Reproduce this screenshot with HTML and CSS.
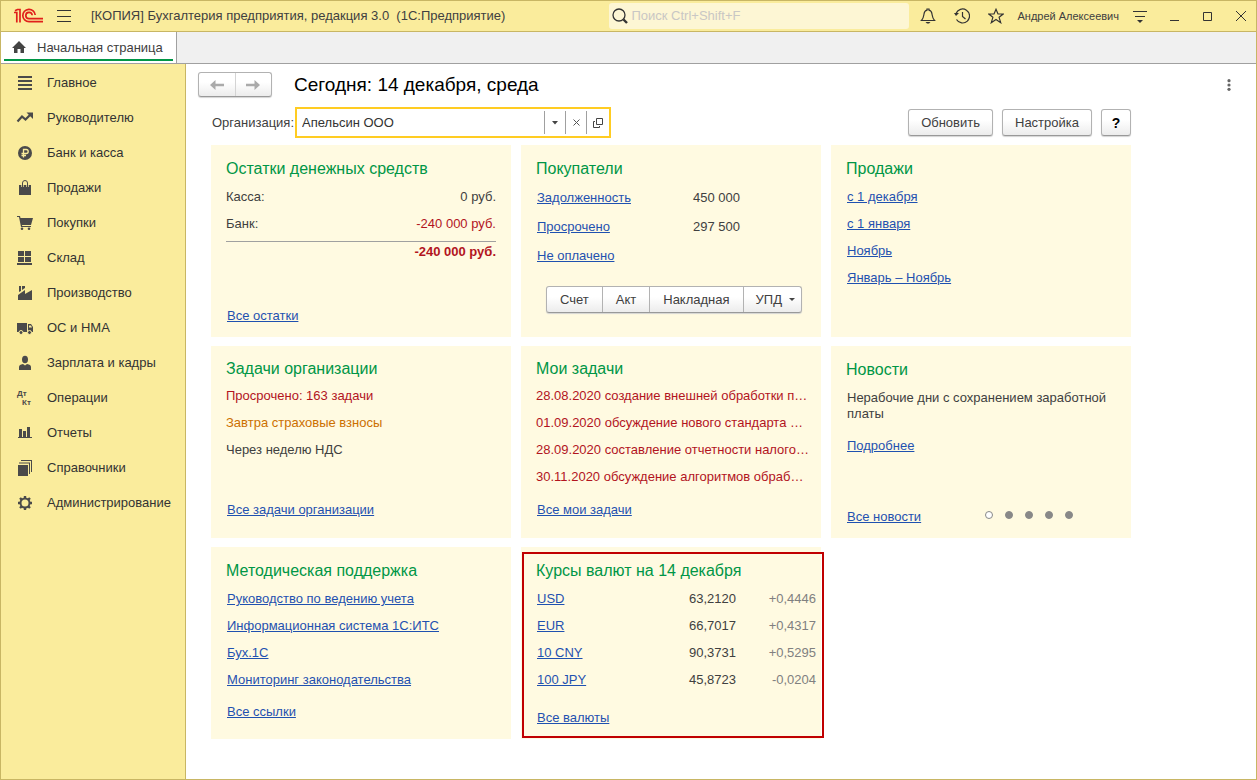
FILE: index.html
```html
<!DOCTYPE html>
<html lang="ru">
<head>
<meta charset="utf-8">
<title>Бухгалтерия предприятия</title>
<link rel="stylesheet" href="styles.css">
</head>
<body>
<div class="window">
  <header class="titlebar">
    <svg class="logo" width="30" height="16" viewBox="0 0 30 16" fill="none" stroke="#e0201b" stroke-width="1.700"><path d="M0 4.500H2.800V14.500M1 2.800L3.500 1.500H6V14.500M21.200 7A6.200 6.200 0 1 0 15 13.700H29M18.200 7.300A3.200 3.200 0 1 0 15 10.700H29"/></svg>
    <button class="flat menu" aria-label="Меню"><svg width="16" height="14" viewBox="0 0 16 14" stroke="#333" stroke-width="1"><path d="M1 1.5H15M1 7.5H15M1 12.5H15"/></svg></button>
    <span class="caption">[КОПИЯ] Бухгалтерия предприятия, редакция 3.0&nbsp; (1С:Предприятие)</span>
    <div class="search">
      <svg width="16" height="16" viewBox="0 0 16 16" fill="none" stroke="#333"><circle cx="7" cy="7" r="6" stroke-width="1.3"/><path d="M11.5 11.5L15 15" stroke-width="2.4"/></svg>
      <input type="search" aria-label="Поиск" placeholder="Поиск Ctrl+Shift+F">
    </div>
    <button class="flat tool" aria-label="Уведомления"><svg width="16" height="16" viewBox="0 0 16 16" fill="none" stroke="#333" stroke-width="1.2"><path d="M1.5 12.5C3.5 10.5 3.5 9 4 6C4.300 3.500 5.500 2.500 7 2.200V1H9V2.200C10.500 2.500 11.700 3.500 12 6C12.500 9 12.500 10.500 14.500 12.500Z"/><path d="M5.500 14H10.500L9 15.600H7Z" fill="#333" stroke="none"/></svg></button>
    <button class="flat tool" aria-label="История"><svg width="16" height="16" viewBox="0 0 16 16" fill="none" stroke="#333" stroke-width="1.2"><path d="M2 5.500A7 7 0 1 1 2.500 11.500M8.500 4V8.500L11.500 11"/><path d="M0 5H5L2 8Z" fill="#333" stroke="none"/></svg></button>
    <button class="flat tool" aria-label="Избранное"><svg width="16" height="16" viewBox="0 0 16 16" fill="none" stroke="#333" stroke-width="1.200"><path d="M8 1.300L10 6H15.200L11.100 9.300L12.700 14.700L8 11.500L3.300 14.700L4.900 9.300L.8 6H6Z"/></svg></button>
    <button class="flat user">Андрей Алексеевич</button>
    <button class="flat tool" aria-label="Настройки окна"><svg width="16" height="16" viewBox="0 0 16 16" stroke="#333"><path d="M1 3.500H15M3 8.500H13"/><path d="M5 12H11L8 15Z" fill="#333" stroke="none"/></svg></button>
    <button class="flat control" aria-label="Свернуть"><svg width="16" height="16" viewBox="0 0 16 16" stroke="#333"><path d="M4 12.500H13"/></svg></button>
    <button class="flat control" aria-label="Развернуть"><svg width="16" height="16" viewBox="0 0 16 16" fill="none" stroke="#333"><path d="M4.500 4.500H12.500V12.500H4.500Z"/></svg></button>
    <button class="flat control" aria-label="Закрыть"><svg width="16" height="16" viewBox="0 0 16 16" stroke="#333"><path d="M4 3L14 13M14 3L4 13"/></svg></button>
  </header>

  <nav class="tabs" aria-label="Открытые страницы">
    <a class="tab" href="#"><svg width="14" height="13" viewBox="0 0 14 13" fill="#444"><path d="M7 0L14 7H12V12H8.500V8H5.500V12H2V7H0Z"/></svg><span>Начальная страница</span></a>
  </nav>

  <div class="body">
    <nav class="sidebar" aria-label="Разделы">
      <a href="#"><svg viewBox="0 0 16 16"><path d="M1 1H15V3H1ZM1 5H15V7H1ZM1 9H15V11H1ZM1 13H15V15H1Z"/></svg>Главное</a>
      <a href="#"><svg viewBox="0 0 16 16"><path d="M.5 11.500L5 6.500L8.500 9.500L13 5" fill="none" stroke="#4a4a4a" stroke-width="2.200"/><path d="M9.500 2.500H16V9Z"/></svg>Руководителю</a>
      <a href="#"><svg viewBox="0 0 16 16"><circle cx="8" cy="8" r="7"/><path d="M6.500 12.500V4.500H9.200A2 2 0 0 1 9.200 8.500H4.500M4.500 10.500H9" fill="none" stroke="#faec9c" stroke-width="1.300"/></svg>Банк и касса</a>
      <a href="#"><svg viewBox="0 0 16 16"><path d="M2 5H14V15H2Z"/><path d="M5.500 7V3.500A2.500 2.500 0 0 1 10.500 3.500V7" fill="none" stroke="#faec9c" stroke-width="2.400"/><path d="M5.500 7V3A2.500 2.500 0 0 1 10.500 3V7" fill="none" stroke="#4a4a4a"/></svg>Продажи</a>
      <a href="#"><svg viewBox="0 0 16 16"><path d="M0 1H3L3.500 3H16L14 10H5L5.200 11H14V12H4L2 2H0Z"/><circle cx="5" cy="13.700" r="1.300"/><circle cx="12" cy="13.700" r="1.300"/></svg>Покупки</a>
      <a href="#"><svg viewBox="0 0 16 16"><path d="M1 1H7V6H1ZM8 1H14V6H8ZM1 7H7V12H1ZM8 7H14V12H8ZM0 13H15V15H0Z"/></svg>Склад</a>
      <a href="#"><svg viewBox="0 0 16 16"><path d="M1 15V10L8 5V9L15 5V15ZM2 1H4V6L2 7ZM5 1H8V3L5 5Z"/></svg>Производство</a>
      <a href="#"><svg viewBox="0 0 16 16"><path d="M0 3H10V12H0ZM11 4H14L16 7V12H11Z"/><path d="M12 5.500H14L15 7.500H12Z" fill="#faec9c"/><g stroke="#faec9c"><circle cx="4" cy="12.500" r="2"/><circle cx="12.500" cy="12.500" r="2"/></g></svg>ОС и НМА</a>
      <a href="#"><svg viewBox="0 0 16 16"><ellipse cx="8" cy="4.500" rx="3" ry="3.800"/><path d="M2 15V12Q2 9.500 6 9L8 10.500L10 9Q14 9.500 14 12V15Z"/></svg>Зарплата и кадры</a>
      <a href="#"><svg viewBox="0 0 16 16" class="dtkt"><text x="0" y="6">Дт</text><text x="5" y="15">Кт</text></svg>Операции</a>
      <a href="#"><svg viewBox="0 0 16 16"><path d="M2 4H5V12H2ZM6 6H9V12H6ZM10 2H13V12H10ZM1 12H15V13H1Z"/></svg>Отчеты</a>
      <a href="#"><svg viewBox="0 0 16 16"><path d="M1 5H11V16H1ZM2 2.500H13V14H12V3.500H2ZM4 0H15V12H14V1H4Z"/></svg>Справочники</a>
      <a href="#"><svg viewBox="0 0 16 16" fill="none" stroke="#4a4a4a"><circle cx="8" cy="8" r="4.500" stroke-width="2"/><path d="M8 1V3.500M8 12.500V15M1 8H3.500M12.500 8H15M3 3L4.900 4.900M11.100 11.100L13 13M13 3L11.100 4.900M4.900 11.100L3 13" stroke-width="2.400"/></svg>Администрирование</a>
    </nav>

    <main class="main">
      <div class="heading">
        <div class="group history">
          <button aria-label="Назад"><svg width="14" height="10" viewBox="0 0 14 10" fill="#aaa"><path d="M0 5L5.500 0V3.700H14V6.300H5.500V10Z"/></svg></button><button aria-label="Вперед"><svg width="14" height="10" viewBox="0 0 14 10" fill="#aaa"><path d="M14 5L8.500 0V3.700H0V6.300H8.500V10Z"/></svg></button>
        </div>
        <h1>Сегодня: 14 декабря, среда</h1>
        <button class="flat more" aria-label="Еще"><svg width="4" height="12" viewBox="0 0 4 12" fill="#666"><circle cx="2" cy="1.700" r="1.600"/><circle cx="2" cy="6" r="1.600"/><circle cx="2" cy="10.300" r="1.600"/></svg></button>
      </div>

      <div class="toolbar">
        <label for="org">Организация:</label>
        <div class="field">
          <input id="org" type="text" value="Апельсин ООО">
          <button aria-label="Выбрать"><svg width="6" height="4" viewBox="0 0 6 4" fill="#444"><path d="M0 0H6L3 3.500Z"/></svg></button>
          <button aria-label="Очистить"><svg width="7" height="7" viewBox="0 0 7 7" stroke="#555"><path d="M.5 .5L6.500 6.500M6.500 .5L.5 6.500"/></svg></button>
          <button aria-label="Открыть"><svg width="10" height="10" viewBox="0 0 10 10" fill="none" stroke="#444"><path d="M3.500 .5H9.500V6.500H3.500ZM2 3.500H.5V9.500H6.500V8"/></svg></button>
        </div>
        <div class="actions">
          <button class="btn">Обновить</button>
          <button class="btn">Настройка</button>
          <button class="btn help">?</button>
        </div>
      </div>

      <div class="cards">
        <section class="card">
          <h2>Остатки денежных средств</h2>
          <dl>
            <div class="pair"><dt>Касса:</dt><dd>0 руб.</dd></div>
            <div class="pair"><dt>Банк:</dt><dd class="red">-240 000 руб.</dd></div>
          </dl>
          <p class="total red">-240 000 руб.</p>
          <a class="foot" href="#">Все остатки</a>
        </section>

        <section class="card">
          <h2>Покупатели</h2>
          <table class="debts">
            <tr><td><a href="#">Задолженность</a></td><td>450 000</td></tr>
            <tr><td><a href="#">Просрочено</a></td><td>297 500</td></tr>
            <tr><td><a href="#">Не оплачено</a></td><td></td></tr>
          </table>
          <div class="group docs">
            <button>Счет</button><button>Акт</button><button>Накладная</button><button>УПД<svg width="6" height="3" viewBox="0 0 6 3" fill="#444"><path d="M0 0H6L3 3Z"/></svg></button>
          </div>
        </section>

        <section class="card">
          <h2>Продажи</h2>
          <ul>
            <li><a href="#">с 1 декабря</a></li>
            <li><a href="#">с 1 января</a></li>
            <li><a href="#">Ноябрь</a></li>
            <li><a href="#">Январь – Ноябрь</a></li>
          </ul>
        </section>

        <section class="card tasks">
          <h2>Задачи организации</h2>
          <ul>
            <li class="red">Просрочено: 163 задачи</li>
            <li class="orange">Завтра страховые взносы</li>
            <li>Через неделю НДС</li>
          </ul>
          <a class="foot" href="#">Все задачи организации</a>
        </section>

        <section class="card tasks">
          <h2>Мои задачи</h2>
          <ul class="red">
            <li>28.08.2020 создание внешней обработки п…</li>
            <li>01.09.2020 обсуждение нового стандарта …</li>
            <li>28.09.2020 составление отчетности налого…</li>
            <li>30.11.2020 обсуждение алгоритмов обраб…</li>
          </ul>
          <a class="foot" href="#">Все мои задачи</a>
        </section>

        <section class="card">
          <h2>Новости</h2>
          <p class="news">Нерабочие дни с сохранением заработной платы</p>
          <a class="details" href="#">Подробнее</a>
          <div class="foot pager">
            <a href="#">Все новости</a>
            <div class="dots">
              <button class="dot current" aria-label="Новость 1"></button>
              <button class="dot" aria-label="Новость 2"></button>
              <button class="dot" aria-label="Новость 3"></button>
              <button class="dot" aria-label="Новость 4"></button>
              <button class="dot" aria-label="Новость 5"></button>
            </div>
          </div>
        </section>

        <section class="card support">
          <h2>Методическая поддержка</h2>
          <ul>
            <li><a href="#">Руководство по ведению учета</a></li>
            <li><a href="#">Информационная система 1С:ИТС</a></li>
            <li><a href="#">Бух.1С</a></li>
            <li><a href="#">Мониторинг законодательства</a></li>
          </ul>
          <a class="foot" href="#">Все ссылки</a>
        </section>

        <section class="card rates">
          <h2>Курсы валют на 14 декабря</h2>
          <table>
            <tr><td><a href="#">USD</a></td><td>63,2120</td><td>+0,4446</td></tr>
            <tr><td><a href="#">EUR</a></td><td>66,7017</td><td>+0,4317</td></tr>
            <tr><td><a href="#">10 CNY</a></td><td>90,3731</td><td>+0,5295</td></tr>
            <tr><td><a href="#">100 JPY</a></td><td>45,8723</td><td>-0,0204</td></tr>
          </table>
          <a class="foot" href="#">Все валюты</a>
        </section>
      </div>
    </main>
  </div>
</div>
</body>
</html>
```
FILE: styles.css
```css
* { box-sizing: border-box; }

body {
  margin: 0;
  font: 13px/16px "Liberation Sans", Arial, sans-serif;
  color: #404040;
}

h1, h2, p, ul, dl, dd { margin: 0; }
ul { padding: 0; list-style: none; }
button, input { font: inherit; color: inherit; }
button { padding: 0; }
svg { display: block; flex: none; }
a { color: #1f51b0; }

.window {
  display: flex;
  flex-direction: column;
  min-height: 100vh;
  border: 1px solid #c8b664;
  background: #fff;
}

/* Title bar */
.titlebar {
  display: flex;
  align-items: center;
  height: 31px;
  padding-left: 13px;
  background: #faec9c;
  border-bottom: 1px solid #c8b664;
}

.flat {
  display: flex;
  align-items: center;
  justify-content: center;
  border: 0;
  background: none;
}

.menu { margin-left: 12px; }
.caption { margin: 0 auto 0 19px; white-space: nowrap; }

.search {
  display: flex;
  align-items: center;
  gap: 3px;
  width: 300px;
  height: 26px;
  padding: 0 3px;
  border-radius: 3px;
  background: #fdf6d4;
}

.search input {
  flex: 1;
  min-width: 0;
  padding: 0;
  border: 0;
  outline: 0;
  background: none;
}
.search input::placeholder { color: #c9c7c4; opacity: 1; }

.tool { width: 34px; height: 30px; }
.search + .tool { margin-left: 2px; }
.control { width: 33px; height: 30px; }
.user { padding: 0 4px; font-size: 11px; white-space: nowrap; }

/* Tabs */
.tabs {
  display: flex;
  height: 32px;
  background: #f0f0f0;
  border-bottom: 1px solid #a0a0a0;
}

.tab {
  display: flex;
  align-items: center;
  gap: 11px;
  width: 176px;
  padding: 0 11px;
  background: linear-gradient(#009646, #009646) 3px 27px / 169px 2px no-repeat #fff;
  border-right: 1px solid #a0a0a0;
  color: #404040;
  text-decoration: none;
  white-space: nowrap;
}

.body { display: flex; flex: 1; }

/* Sections */
.sidebar {
  flex: none;
  width: 185px;
  padding-top: 1px;
  background: #faec9c;
  border-right: 1px solid #c8b664;
}

.sidebar a {
  display: flex;
  align-items: center;
  gap: 14px;
  height: 35px;
  padding-left: 16px;
  color: #333;
  text-decoration: none;
  white-space: nowrap;
}

.sidebar svg { width: 16px; height: 16px; fill: #4a4a4a; overflow: visible; }
.sidebar svg[fill="none"] { fill: none; }
.dtkt { font-size: 8px; font-weight: bold; }

/* Page heading */
.main { flex: 1; min-width: 0; padding: 8px 12px; }

.heading {
  display: flex;
  align-items: center;
  gap: 22px;
  height: 25px;
}

h1 { color: #000; font-size: 19px; font-weight: normal; line-height: 24px; }
.more { width: 20px; height: 20px; margin: 0 5px 0 auto; }

.btn, .group {
  border: 1px solid #b2b2b2;
  border-bottom-color: #999;
  border-radius: 3px;
  background: linear-gradient(#fff 40%, #ececec);
  box-shadow: 0 1px 1px #d4d4d4;
}

.group { display: flex; }
.group button {
  display: flex;
  align-items: center;
  justify-content: center;
  border: 0;
  background: none;
}
.group button + button { border-left: 1px solid #b2b2b2; }

.history { width: 74px; height: 25px; }
.history button { flex: 1; }
.history button + button { border-color: #d4d4d4; }

/* Organization row */
.toolbar {
  display: flex;
  align-items: center;
  max-width: 933px;
  margin-top: 10px;
  padding-left: 14px;
}

.field {
  display: flex;
  align-items: center;
  width: 316px;
  height: 31px;
  margin-left: 1px;
  border: 2px solid #fc2;
  background: #fff;
}

.field input {
  flex: 1;
  min-width: 0;
  padding: 0 5px;
  border: 0;
  outline: 0;
  color: #333;
}

.field button {
  display: flex;
  align-items: center;
  justify-content: center;
  width: 21px;
  height: 23px;
  border: 0;
  border-left: 1px solid #a0a0a0;
  background: none;
}
.field button:last-child { width: 23px; }

.actions { display: flex; gap: 9px; margin-left: auto; }
.btn { height: 27px; padding: 0 12px; }
.help { width: 30px; padding: 0; color: #000; font-size: 14px; font-weight: bold; }

/* Cards */
.cards {
  display: grid;
  grid-template-columns: repeat(3, minmax(0, 300px));
  grid-auto-rows: minmax(192px, auto);
  gap: 9px 10px;
  margin: 7px 0 0 13px;
}

.card {
  display: flex;
  flex-direction: column;
  padding: 12px 15px 13px;
  background: #fffae1;
}

h2 {
  margin-bottom: 2px;
  color: #009646;
  font-size: 16px;
  font-weight: normal;
  line-height: 24px;
}

.card li, .pair { line-height: 27px; }
.card li { white-space: nowrap; }
.card a { margin-left: 1px; }
.card .foot { align-self: flex-start; margin-top: auto; }

.tasks { padding: 11px 15px 20px; }
.tasks h2 { margin-bottom: 1px; }
.support { padding-bottom: 19px; }

.pair { display: flex; justify-content: space-between; }
.card .red { color: #b2141e; }
.card .orange { color: #cc7000; }

.total {
  margin-top: 4px;
  border-top: 1px solid #a0a0a0;
  font-weight: bold;
  line-height: 20px;
  text-align: right;
}

table { border-collapse: collapse; }
td { height: 27px; padding: 0; }

.debts { width: 204px; }
.debts td { height: 29px; }
.debts td + td { text-align: right; }

.docs { align-self: flex-start; height: 27px; margin: 16px 0 0 10px; }
.docs button { gap: 7px; padding: 0 13px; }
.docs button:last-child { padding: 0 6px 0 12px; }

.news { padding: 6px 0 0 1px; }
.details { margin-top: 16px; }

.pager { display: flex; gap: 64px; }
.dots { display: flex; gap: 12px; padding-top: 2px; }
.dot {
  width: 8px;
  height: 8px;
  border: 1px solid #888;
  border-radius: 50%;
  background: #888;
}
.dot.current { background: #fff; }

/* Highlighted card: the frame lies over the card and its margin */
.rates { position: relative; }
.rates::after {
  content: "";
  position: absolute;
  inset: 5px -3px 1px 1px;
  border: 2px solid #c00000;
  pointer-events: none;
}
.rates table { width: 280px; }
.rates td + td { width: 80px; text-align: right; }
.rates td:last-child { color: #808080; }
```
